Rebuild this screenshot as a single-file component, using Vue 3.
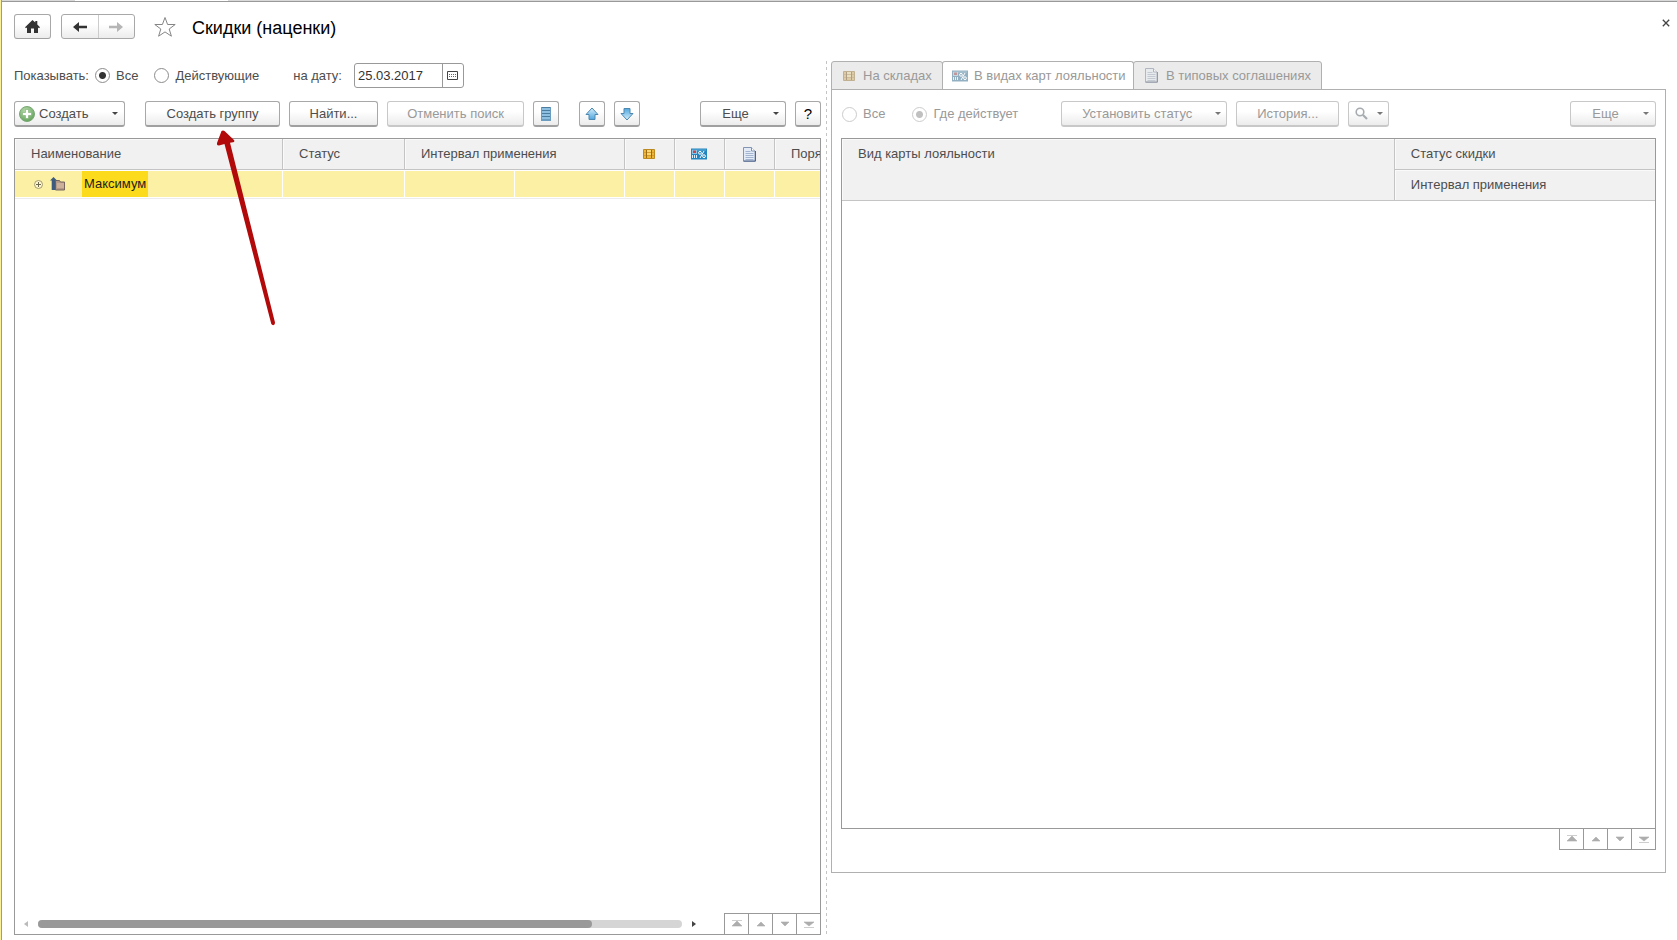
<script setup>
import { ref } from 'vue'

const show = ref('all')
const date = ref('25.03.2017')
const scope = ref('active')
const tabs = [
  { id: 'stock', label: 'На складах', icon: 'i-box', w: 12, h: 10 },
  { id: 'cards', label: 'В видах карт лояльности', icon: 'i-card', w: 16, h: 12 },
  { id: 'deals', label: 'В типовых соглашениях', icon: 'i-doc', w: 13, h: 15 }
]
const current = ref('cards')
const steps = [
  { label: 'В начало', d: 'M3 1.5h10M8 2l5 5H3z' },
  { label: 'Вверх', d: 'M8 3l4 4H4z' },
  { label: 'Вниз', d: 'M8 7l4-4H4z' },
  { label: 'В конец', d: 'M3 8.500h10M8 7l5-4H3z' }
]
</script>

<template>
  <div class="page">
    <svg class="defs" aria-hidden="true">
      <defs>
        <linearGradient id="g-blue" x1="0" y1="0" x2="0" y2="1">
          <stop offset="0" stop-color="#d6effb" /><stop offset="1" stop-color="#4fa6de" />
        </linearGradient>
        <radialGradient id="g-green" cx=".4" cy=".3" r=".8">
          <stop offset="0" stop-color="#b5d9a8" /><stop offset="1" stop-color="#5c9f56" />
        </radialGradient>
      </defs>
      <symbol id="i-box" viewBox="0 0 12 10">
        <path d="M.5.500h11v9H.5z" fill="#eeb638" stroke="#bd8a22" />
        <path d="M1 3.500h10M1 6.500h10" fill="none" stroke="#d0962a" stroke-width=".8" />
        <path d="M3.500 1v8M8.500 1v8" fill="none" stroke="#9c6c12" />
        <path d="M4 1h4v2H4zM4 4h4v2H4z" fill="#f8d772" />
      </symbol>
      <symbol id="i-card" viewBox="0 0 16 12">
        <path d="M0 .500h16v11H0z" fill="#2385bf" />
        <path d="M1 1.500h14v1H1z" fill="#63aed8" />
        <path d="M1 2h5v4H1z" fill="#8cc4e5" /><path d="M2 2.500h3v2.500H2z" fill="#c9444c" />
        <path d="M1 7h1v3H1zM3 7h1v3H3zM5 7h1v3H5z" fill="#d8eefa" />
        <path d="M13 3l-4 7" stroke="#fff" />
        <circle cx="9" cy="4.800" r="1.400" fill="none" stroke="#fff" /><circle cx="13" cy="8.200" r="1.400" fill="none" stroke="#fff" />
      </symbol>
      <symbol id="i-doc" viewBox="0 0 13 15">
        <path d="M.5.500h8l3.500 3.500v10H.5z" fill="#e3ebf6" stroke="#8495b3" />
        <path d="M.5 14.200h12V4" fill="none" stroke="#4f648b" />
        <path d="M8.500.500V4H12" fill="#fff" stroke="#8192ad" />
        <path d="M2.500 4.500h5M2.500 6.500h8M2.500 8.500h8M2.500 10.500h8M2.500 12.500h8" stroke="#a3b4d1" />
      </symbol>
      <symbol id="i-up" viewBox="0 0 16 16">
        <path d="M8 2l6 6.500h-3V13.500H5V8.500H2z" fill="url(#g-blue)" stroke="#4d88b0" stroke-linejoin="round" />
      </symbol>
      <symbol id="i-arrow" viewBox="0 0 16 12">
        <path d="M1 6l6-5v3.700h8v2.600H7V11z" fill="currentColor" />
      </symbol>
    </svg>

    <div class="strip"><i class="strip-tab"></i></div>

    <header class="head">
      <button class="btn home" aria-label="Домой">
        <svg width="15" height="14" viewBox="0 0 15 14"><path d="M7.500 0l2.800 2.600V1h2v3.500L15 7.200l-1 1-1-.8V13H9V8.500H6V13H2V7.400l-1 .8-1-1z" fill="#333" /></svg>
      </button>
      <div class="history">
        <button aria-label="Назад"><svg width="16" height="12"><use href="#i-arrow" /></svg></button>
        <button class="fwd" aria-label="Вперед"><svg class="flip" width="16" height="12"><use href="#i-arrow" /></svg></button>
      </div>
      <button class="plain star" aria-label="Избранное">
        <svg width="24" height="22" viewBox="0 0 24 22"><path d="M12 1.500l2.600 7h7.600l-6 4.500 2.200 7.200L12 15.900l-6.400 4.300L7.800 13l-6-4.500h7.600z" fill="#fff" stroke="#858585" /></svg>
      </button>
      <h1>Скидки (наценки)</h1>
      <button class="plain close" aria-label="Закрыть">
        <svg width="8" height="8" viewBox="0 0 8 8"><path d="M.8.8l6.400 6.400M7.200.8L.8 7.200" stroke="#444" stroke-width="1.300" /></svg>
      </button>
    </header>

    <main class="work">
      <section class="left">
        <div class="filter">
          <span>Показывать:</span>
          <label class="radio first"><input v-model="show" type="radio" name="show" value="all">Все</label>
          <label class="radio second"><input v-model="show" type="radio" name="show" value="active">Действующие</label>
          <label class="date-label" for="date">на дату:</label>
          <div class="date">
            <input id="date" v-model="date" type="text">
            <button aria-label="Календарь">
              <svg width="11" height="9" viewBox="0 0 11 9"><path d="M.5.500h10v8H.5z" fill="#fff" stroke="#444" /><path d="M2 3.500h7M2 5.500h7" stroke="#666" stroke-dasharray="1 1" /></svg>
            </button>
          </div>
        </div>

        <div class="tools">
          <button class="btn create">
            <svg width="16" height="16" viewBox="0 0 16 16"><circle cx="8" cy="8" r="7.500" fill="url(#g-green)" stroke="#7ba775" /><path d="M6.500 3.500h3v3h3v3h-3v3h-3v-3h-3v-3h3z" fill="#fff" stroke="#79ad6f" stroke-width=".6" /></svg>
            <span>Создать</span><i class="caret"></i>
          </button>
          <button class="btn group">Создать группу</button>
          <button class="btn find">Найти...</button>
          <button class="btn cancel" disabled>Отменить поиск</button>
          <button class="btn icon" aria-label="Список">
            <svg width="12" height="16" viewBox="0 0 12 16"><path d="M1 1h10v14H1z" fill="#8dbfe0" /><path d="M1 1.500h10M1 4.500h10M1 7.500h10M1 10.500h10M1 14h10" stroke="#4c7c9f" /><path d="M1.500 1v13M10.500 1v13" stroke="#6a9cc0" /></svg>
          </button>
          <button class="btn icon up" aria-label="Переместить вверх"><svg width="16" height="16"><use href="#i-up" /></svg></button>
          <button class="btn icon" aria-label="Переместить вниз"><svg class="turn" width="16" height="16"><use href="#i-up" /></svg></button>
          <button class="btn more push"><span>Еще</span><i class="caret"></i></button>
          <button class="btn icon help">?</button>
        </div>

        <div class="frame">
          <div class="viewport">
            <table class="discounts">
              <colgroup><col class="c-name"><col class="c-status"><col class="c-int"><col class="c-int"><col class="c-ico"><col class="c-ico"><col class="c-ico"><col class="c-order"></colgroup>
              <thead>
                <tr>
                  <th>Наименование</th>
                  <th>Статус</th>
                  <th colspan="2">Интервал применения</th>
                  <th class="ico"><svg width="12" height="10"><use href="#i-box" /></svg></th>
                  <th class="ico"><svg width="16" height="12"><use href="#i-card" /></svg></th>
                  <th class="ico"><svg width="13" height="15"><use href="#i-doc" /></svg></th>
                  <th>Порядок</th>
                </tr>
              </thead>
              <tbody>
                <tr>
                  <td>
                    <div class="node">
                      <svg width="9" height="9" viewBox="0 0 9 9"><circle cx="4.500" cy="4.500" r="4" fill="#fff8cf" stroke="#a39a6c" /><path d="M2 4.500h5M4.500 2v5" stroke="#6d684e" /></svg>
                      <svg class="folder" width="16" height="14" viewBox="0 0 16 14"><path d="M5.500 3.500h4l1 1.500h4v8h-9z" fill="#b59a88" stroke="#77675e" /><path d="M7 6h7v5H7z" fill="#cbb09a" /><path d="M3.500 0L7 3.500H5.300V13H1.700V3.500H0z" fill="#3e5a7c" /></svg>
                      <span class="picked">Максимум</span>
                    </div>
                  </td>
                  <td></td><td></td><td></td><td></td><td></td><td></td><td></td>
                </tr>
              </tbody>
            </table>
          </div>
          <div class="foot">
            <i class="tri back"></i>
            <div class="track"><div class="thumb"></div></div>
            <i class="tri ahead"></i>
            <div class="steps">
              <button v-for="s in steps" :key="s.label" :aria-label="s.label"><svg width="16" height="10" viewBox="0 0 16 10"><path :d="s.d" /></svg></button>
            </div>
          </div>
        </div>
      </section>

      <div class="split"></div>

      <section class="right">
        <div class="tabs" role="tablist">
          <button v-for="t in tabs" :key="t.id" role="tab" :class="['tab', t.id, { on: current === t.id }]" :aria-selected="current === t.id" @click="current = t.id">
            <svg :width="t.w" :height="t.h"><use :href="'#' + t.icon" /></svg>{{ t.label }}
          </button>
        </div>
        <div class="panel">
          <div class="tools">
            <label class="radio off"><input v-model="scope" type="radio" name="scope" value="all" disabled>Все</label>
            <label class="radio off where"><input v-model="scope" type="radio" name="scope" value="active" disabled>Где действует</label>
            <button class="btn status" disabled><span>Установить статус</span><i class="caret"></i></button>
            <button class="btn log" disabled>История...</button>
            <button class="btn search" disabled aria-label="Поиск">
              <svg width="13" height="13" viewBox="0 0 13 13"><circle cx="5" cy="5" r="3.800" fill="none" stroke="#a5abb0" stroke-width="1.600" /><path d="M8 8l4 4" stroke="#a5abb0" stroke-width="2.200" /></svg>
              <i class="caret"></i>
            </button>
            <button class="btn more push" disabled><span>Еще</span><i class="caret"></i></button>
          </div>
          <div class="frame">
            <table class="cards">
              <colgroup><col class="c-kind"><col class="c-state"></colgroup>
              <thead>
                <tr><th rowspan="2" class="kind">Вид карты лояльности</th><th>Статус скидки</th></tr>
                <tr><th>Интервал применения</th></tr>
              </thead>
            </table>
          </div>
          <div class="steps under">
            <button v-for="s in steps" :key="s.label" :aria-label="s.label"><svg width="16" height="10" viewBox="0 0 16 10"><path :d="s.d" /></svg></button>
          </div>
        </div>
      </section>
    </main>

    <svg class="pointer" width="60" height="200" viewBox="0 0 60 200" aria-hidden="true">
      <path d="M4.500 1q1.500-1 3 0l9.500 9q1 2-1 2.300l-3 .4L58 192.500q0 2-1.300 2.500t-2.400-1L7.500 14 2 15.500q-2.500 0-2-2.500z" fill="#b20a0a" />
    </svg>
  </div>
</template>

<style>
body { margin: 0; background: #fff; }
</style>

<style scoped>
* { box-sizing: border-box; }
.page {
  position: relative;
  display: flex;
  flex-direction: column;
  height: 100vh;
  padding-left: 2px;
  overflow: hidden;
  background: linear-gradient(90deg, #fbf09a 1px, #aaa04e 1px, #aaa04e 2px, #fff 2px);
  font: 13px/16px "Liberation Sans", Arial, sans-serif;
  color: #4d4d4d;
}
button, input { font: inherit; color: inherit; margin: 0; }
button { padding: 0; }
svg { display: block; flex: none; }
.defs { position: absolute; width: 0; height: 0; }
.strip { flex: none; height: 2px; background: #d9d9d9; border-bottom: 1px solid #999; }
.strip-tab { display: block; width: 153px; height: 1px; margin-left: 73px; background: #fff; }

.btn {
  display: flex;
  align-items: center;
  justify-content: center;
  flex: none;
  height: 26px;
  border: 1px solid #a8a8a8;
  border-bottom: 2px solid #a0a0a0;
  border-radius: 3px;
  background: linear-gradient(#fff 40%, #ececec);
}
.btn:disabled { color: #999; border-color: #c8c8c8; }
.caret { border: 3px solid transparent; border-top-color: #444; border-bottom: 0; }
.btn:disabled .caret { border-top-color: #777; }
.plain { border: 0; background: none; }

.head { display: flex; align-items: center; flex: none; height: 25px; margin: 12px 7px 22px 12px; }
.head .home { width: 37px; height: 25px; border-bottom-width: 1px; }
.history { display: flex; width: 74px; height: 25px; margin-left: 10px; border: 1px solid #a8a8a8; border-radius: 3px; background: linear-gradient(#fff 40%, #ececec); }
.history button { display: flex; flex: 1; align-items: center; justify-content: center; border: 0; background: none; color: #333; }
.history .fwd { border-left: 1px solid #ccc; color: #b5b5b5; }
.flip { transform: scaleX(-1); }
.turn { transform: rotate(180deg); }
.star { margin-left: 18px; }
h1 { margin: 0 0 0 15px; padding-top: 2px; font-size: 18px; line-height: 24px; font-weight: 400; color: #000; }
.close { margin: 0 0 7px auto; }

.work { display: grid; flex: 1; grid-template-columns: minmax(0, 807fr) 10px minmax(0, 835fr); min-height: 0; margin: 0 11px 5px 12px; }
.left { display: flex; flex-direction: column; padding-top: 2px; }
.split { margin-left: 5px; background: repeating-linear-gradient(#c4c4c4 0 3px, transparent 3px 6px) 0 0 / 1px 100% no-repeat; }

.filter { display: flex; align-items: center; height: 25px; margin-bottom: 13px; }
.radio { display: flex; align-items: center; gap: 6px; white-space: nowrap; }
.radio input { appearance: none; width: 15px; height: 15px; border: 1px solid #8c8c8c; border-radius: 50%; background: #fff; }
.radio input:checked { background: radial-gradient(circle, #333 0 3px, #fff 4px); }
.radio.off { color: #999; }
.radio.off input { border-color: #ccc; }
.radio.off input:checked { background: radial-gradient(circle, #c0c0c0 0 3px, #fff 4px); }
.first { margin-left: 6px; }
.second { margin-left: 16px; }
.date-label { margin-left: 34px; }
.date { display: flex; width: 110px; height: 25px; margin-left: 12px; border: 1px solid #999; border-radius: 3px; background: #fff; }
.date input { flex: 1; min-width: 0; padding: 0 3px; border: 0; background: none; color: #333; }
.date button { display: flex; align-items: center; justify-content: center; width: 21px; border: 0; border-left: 1px solid #999; background: none; }

.tools { display: flex; flex: none; align-items: center; height: 26px; margin-bottom: 11px; }
.create { width: 111px; padding: 0 6px 0 4px; }
.create span { margin-left: 4px; }
.create .caret { margin-left: auto; }
.group { width: 135px; margin-left: 20px; }
.find { width: 89px; margin-left: 9px; }
.cancel { width: 137px; margin-left: 9px; }
.icon { width: 26px; margin-left: 9px; }
.icon.up { margin-left: 20px; }
.more { width: 86px; padding-right: 6px; }
.more span, .status span { flex: 1; padding-right: 3px; }
.push { margin-left: auto; }
.help { color: #000; font-size: 15px; }

.frame { display: flex; flex: 1; flex-direction: column; min-height: 0; border: 1px solid #999; }
.viewport { flex: 1; overflow: hidden; }
table { border-spacing: 0; table-layout: fixed; }
th { height: 31px; padding: 0 15px 0 16px; border: solid #c4c4c4; border-width: 0 1px 1px 0; background: #f1f1f1; box-shadow: inset 1px 1px #fafafa; font-weight: 400; text-align: left; white-space: nowrap; }
.discounts { width: 860px; }
.c-name { width: 268px; }
.c-status { width: 122px; }
.c-int { width: 110px; }
.c-ico { width: 50px; }
.c-order { width: 100px; }
th.ico { padding: 0 1px 0 0; }
.ico svg { margin: 0 auto; }
td { height: 28px; padding: 0; border: solid #fff; border-width: 1px 1px 1px 0; background: #fcf0a5; box-shadow: 0 1px #ececec; }
.node { display: flex; align-items: center; padding-left: 19px; }
.folder { margin-left: 7px; }
.picked { height: 26px; margin-left: 16px; padding: 0 2px; background: #fcda1c; line-height: 26px; color: #222; }

.foot { display: flex; flex: none; align-items: center; height: 21px; padding-left: 9px; }
.tri { border: 3px solid transparent; }
.back { border-right: 4px solid #bbb; border-left: 0; }
.ahead { margin: 0 28px 0 10px; border-left: 4px solid #444; border-right: 0; }
.track { flex: 1; height: 8px; margin-left: 10px; border-radius: 4px; background: #d5d5d5; }
.thumb { width: 86%; height: 8px; border-radius: 4px; background: #999; }
.steps { display: flex; flex: none; height: 21px; }
.steps button { display: flex; align-items: center; justify-content: center; width: 24px; border: solid #999; border-width: 1px 0 0 1px; background: #fff; }
.steps svg { fill: #adadad; stroke: #adadad; stroke-width: 0.6; }
.under { align-self: flex-end; border: solid #999; border-width: 0 1px 1px 0; }
.under button { border-top: 0; }

.right { display: flex; flex-direction: column; margin-bottom: 62px; }
.tabs { display: flex; flex: none; height: 29px; margin-bottom: -1px; }
.tab { display: flex; align-items: center; gap: 8px; padding: 0 0 0 11px; border: 1px solid #b0b0b0; border-radius: 3px 3px 0 0; background: #ebebeb; color: #999; white-space: nowrap; }
.tab svg { opacity: 0.6; filter: grayscale(0.5); }
.tab.on { border-bottom-color: #fff; background: #fff; }
.stock { width: 112px; }
.cards.tab { width: 192px; margin-left: -1px; padding-left: 9px; gap: 6px; }
.deals { width: 189px; margin-left: -1px; }
.panel { display: flex; flex: 1; flex-direction: column; padding: 11px 9px 22px; border: 1px solid #b0b0b0; min-height: 0; }
.panel .tools { padding-left: 1px; }
.where { margin-left: 27px; }
.status { width: 166px; margin-left: 43px; padding-right: 5px; }
.log { width: 103px; margin-left: 9px; }
.search { width: 41px; margin-left: 9px; padding: 0 5px 0 6px; justify-content: space-between; }
table.cards { width: 100%; }
.c-state { width: 32%; }
.kind { vertical-align: top; padding-top: 7px; }
table.cards th:not(.kind) { border-right: 0; }

.pointer { position: absolute; left: 217px; top: 130px; }
</style>
